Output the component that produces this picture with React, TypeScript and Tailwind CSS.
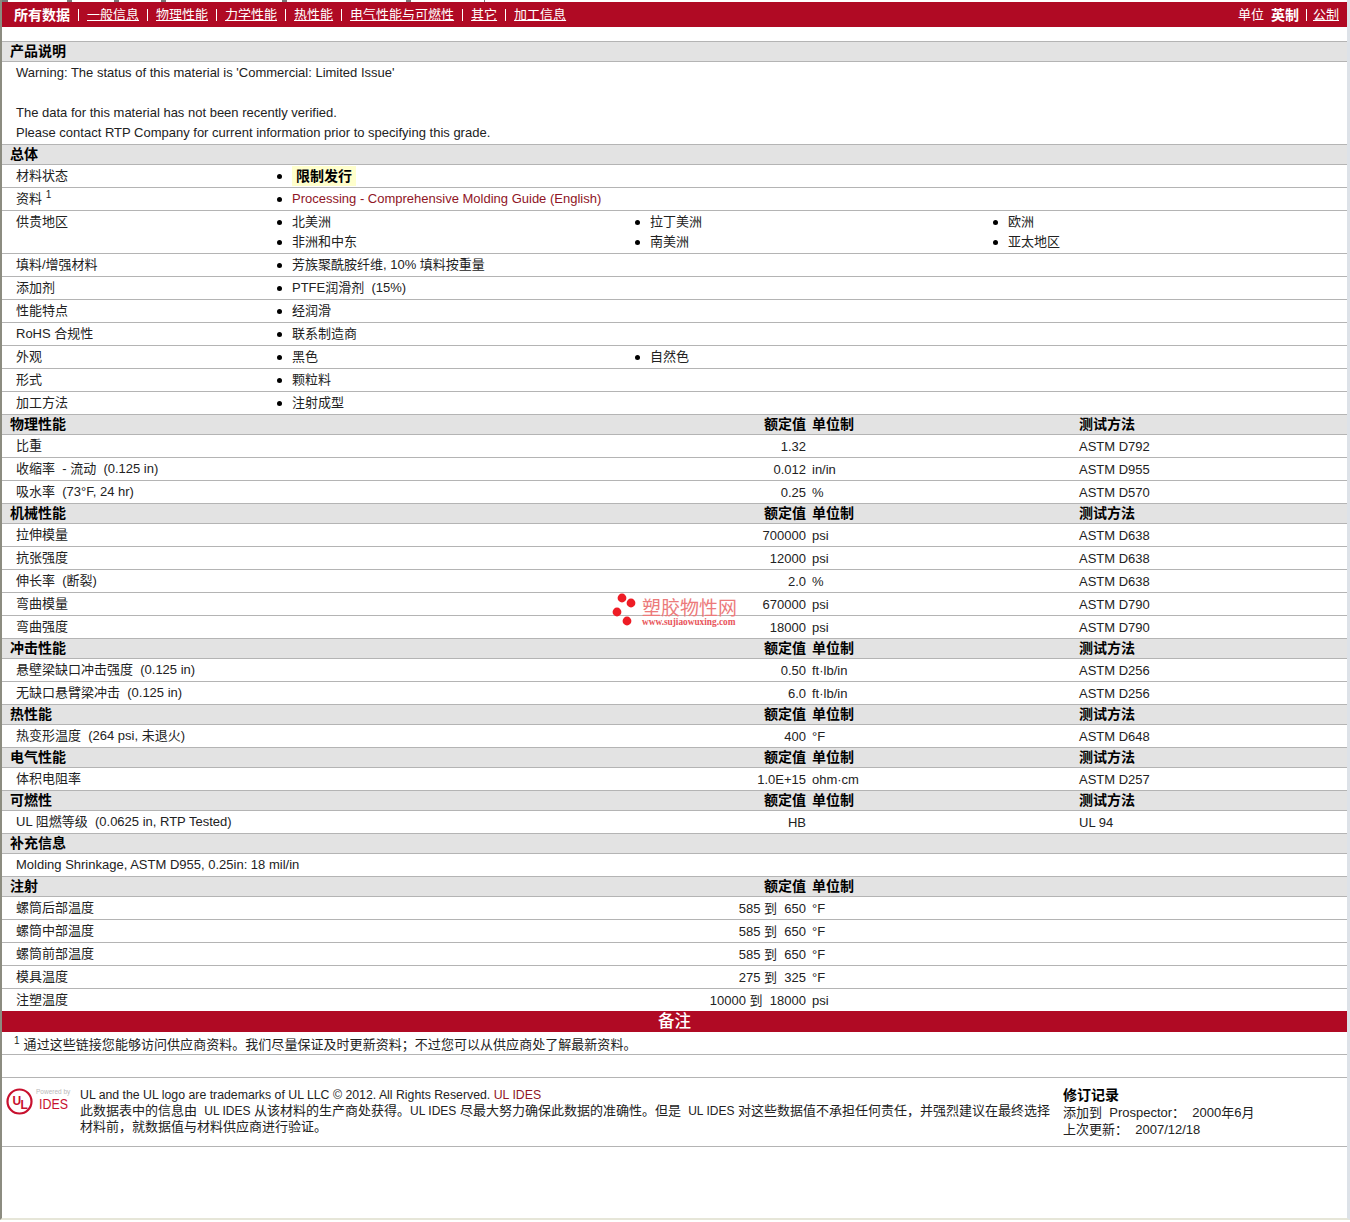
const latin = "font-['Liberation_Sans','Noto_Sans_CJK_SC',sans-serif]"

type DataRow = { label: React.ReactNode; value?: string; unit?: string; test?: string }

function SectionHeader({ title, cols }: { title: string; cols?: 'full' | 'short' }) {
  return (
    <div className="-mt-px flex h-[21px] items-center border-y border-[#b4b4b4] bg-[#e3e3e3] pb-0.5 pl-2 text-[14px] font-bold text-black">
      <span className="w-[744px] shrink-0">{title}</span>
      {cols && (
        <>
          <span className="w-[52px] shrink-0 text-right">额定值</span>
          <span className="ml-1.5 w-[267px] shrink-0">单位制</span>
          {cols === 'full' && <span>测试方法</span>}
        </>
      )}
    </div>
  )
}

function DataRows({ rows }: { rows: DataRow[] }) {
  return (
    <>
      {rows.map((row, i) => (
        <div key={i} className="flex h-[23px] items-center border-b border-[#b4b4b4] pl-3.5">
          <span className="w-[790px] shrink-0 whitespace-pre">{row.label}</span>
          <span className="flex w-0 shrink-0 justify-end pt-0.5 whitespace-pre">{row.value}</span>
          <span className="ml-1.5 w-[267px] shrink-0 pt-0.5 whitespace-pre">{row.unit}</span>
          <span className="pt-0.5">{row.test}</span>
        </div>
      ))}
    </>
  )
}

function Bullet({ children, className }: { children: React.ReactNode; className?: string }) {
  return (
    <span className={`flex items-center ${className ?? ''}`}>
      <span className="mr-2.5 size-[5px] rounded-full bg-black" />
      {children}
    </span>
  )
}

function InfoRow({ label, children }: { label: React.ReactNode; children: React.ReactNode }) {
  return (
    <div className="flex min-h-[23px] border-b border-[#b4b4b4] pt-px pl-3.5">
      <span className="w-[261px] shrink-0">{label}</span>
      <div className="grid flex-1 grid-cols-[358px_358px_1fr] pb-px">{children}</div>
    </div>
  )
}

const physical: DataRow[] = [
  { label: '比重', value: '1.32', test: 'ASTM D792' },
  { label: '收缩率  - 流动  (0.125 in)', value: '0.012', unit: 'in/in', test: 'ASTM D955' },
  { label: '吸水率  (73°F, 24 hr)', value: '0.25', unit: '%', test: 'ASTM D570' },
]
const mechanical: DataRow[] = [
  { label: '拉伸模量', value: '700000', unit: 'psi', test: 'ASTM D638' },
  { label: '抗张强度', value: '12000', unit: 'psi', test: 'ASTM D638' },
  { label: '伸长率  (断裂)', value: '2.0', unit: '%', test: 'ASTM D638' },
  { label: '弯曲模量', value: '670000', unit: 'psi', test: 'ASTM D790' },
  { label: '弯曲强度', value: '18000', unit: 'psi', test: 'ASTM D790' },
]
const impact: DataRow[] = [
  { label: '悬壁梁缺口冲击强度  (0.125 in)', value: '0.50', unit: 'ft·lb/in', test: 'ASTM D256' },
  { label: '无缺口悬臂梁冲击  (0.125 in)', value: '6.0', unit: 'ft·lb/in', test: 'ASTM D256' },
]
const injection: DataRow[] = [
  { label: '螺筒后部温度', value: '585 到  650', unit: '°F' },
  { label: '螺筒中部温度', value: '585 到  650', unit: '°F' },
  { label: '螺筒前部温度', value: '585 到  650', unit: '°F' },
  { label: '模具温度', value: '275 到  325', unit: '°F' },
  { label: '注塑温度', value: '10000 到  18000', unit: 'psi' },
]

function Watermark() {
  return (
    <div className="absolute top-[593px] left-[612px] flex h-[34px] w-[130px] items-start">
      <svg width="26" height="34" viewBox="0 0 26 34" className="shrink-0">
        <circle cx="10" cy="5" r="4.4" fill="#ee1c25" />
        <circle cx="19" cy="10" r="4.4" fill="#ee1c25" />
        <circle cx="5" cy="19" r="4.4" fill="#ee1c25" />
        <circle cx="15" cy="28" r="4.4" fill="#ee1c25" />
      </svg>
      <div className="mt-1.5 ml-1 flex flex-col">
        <span className="text-[19px] leading-[19px] text-[#ec7a7a]">塑胶物性网</span>
        <span className="font-['Liberation_Serif',serif] text-[9.3px] leading-[8px] font-bold whitespace-nowrap text-[#e8555a]">www.sujiaowuxing.com</span>
      </div>
    </div>
  )
}

function UlLogo() {
  return (
    <svg width="70" height="30" viewBox="0 0 70 30" className="shrink-0">
      <circle cx="14.5" cy="13.5" r="12" fill="none" stroke="#c8102e" strokeWidth="2.2" />
      <text x="7.5" y="16.5" fontSize="12" fontWeight="700" fill="#c8102e" fontFamily="Liberation Sans">U</text>
      <text x="15.5" y="20.5" fontSize="12" fontWeight="700" fill="#c8102e" fontFamily="Liberation Sans">L</text>
      <text x="31" y="6" fontSize="6.5" fill="#b9b9b9" fontFamily="Liberation Sans">Powered by</text>
      <text x="34" y="21" fontSize="14" textLength="29" lengthAdjust="spacingAndGlyphs" fill="#c8102e" fontFamily="Liberation Sans">IDES</text>
    </svg>
  )
}

const topTabs = ['w-[59px]', 'w-[42px]', 'w-[42px]', 'w-[116px]', 'w-[119px]', 'w-[73px]']

export default function App() {
  return (
    <div className={`relative h-[1222px] w-[1350px] bg-white text-[13px] leading-5 text-[#222] ${latin}`}>
      <div className="h-[1220px] border-r-[3px] border-b-2 border-l-2 border-r-[#dde2e8] border-b-[#e6e6d8] border-l-[#8c8c80]">
        <div className="flex h-0.5 w-[483px] gap-[5px] bg-[#777] pl-1.5">
          {topTabs.map((w, i) => (
            <span key={i} className={`h-0.5 bg-white ${w}`} />
          ))}
        </div>

        <nav className="flex h-[25px] items-center justify-between bg-[#b00a24] pr-2 pl-3 text-white">
          <div className="flex items-center">
            <span className="text-[14px] font-bold">所有数据</span>
            {['一般信息', '物理性能', '力学性能', '热性能', '电气性能与可燃性', '其它', '加工信息'].map((item) => (
              <span key={item} className="flex items-center">
                <span className="mx-2 h-3 border-l border-white" />
                <a className="underline">{item}</a>
              </span>
            ))}
          </div>
          <div className="flex items-center">
            <span>单位</span>
            <span className="ml-[7px] text-[14px] font-bold">英制</span>
            <span className="mr-1.5 ml-[7px] h-3 border-l border-white" />
            <a className="underline">公制</a>
          </div>
        </nav>

        <div className="h-[15px]" />

        <SectionHeader title="产品说明" />
        <div className="h-[83px] pt-px pl-3.5">
          <p>Warning: The status of this material is 'Commercial: Limited Issue'</p>
          <p>&nbsp;</p>
          <p>The data for this material has not been recently verified.</p>
          <p>Please contact RTP Company for current information prior to specifying this grade.</p>
        </div>

        <SectionHeader title="总体" />
        <InfoRow label="材料状态">
          <Bullet className="col-span-3">
            <span className="bg-[#ffffcc] px-1 text-[14px] font-bold text-black">限制发行</span>
          </Bullet>
        </InfoRow>
        <InfoRow label={<>资料 <sup className="text-[10px]">1</sup></>}>
          <Bullet className="col-span-3">
            <a className="text-[#8f1526]">Processing - Comprehensive Molding Guide (English)</a>
          </Bullet>
        </InfoRow>
        <InfoRow label="供贵地区">
          <Bullet>北美洲</Bullet>
          <Bullet>拉丁美洲</Bullet>
          <Bullet>欧洲</Bullet>
          <Bullet>非洲和中东</Bullet>
          <Bullet>南美洲</Bullet>
          <Bullet>亚太地区</Bullet>
        </InfoRow>
        <InfoRow label="填料/增强材料"><Bullet className="col-span-3">芳族聚酰胺纤维, 10% 填料按重量</Bullet></InfoRow>
        <InfoRow label="添加剂"><Bullet className="col-span-3 whitespace-pre">PTFE润滑剂  (15%)</Bullet></InfoRow>
        <InfoRow label="性能特点"><Bullet className="col-span-3">经润滑</Bullet></InfoRow>
        <InfoRow label="RoHS 合规性"><Bullet className="col-span-3">联系制造商</Bullet></InfoRow>
        <InfoRow label="外观">
          <Bullet>黑色</Bullet>
          <Bullet className="col-span-2">自然色</Bullet>
        </InfoRow>
        <InfoRow label="形式"><Bullet className="col-span-3">颗粒料</Bullet></InfoRow>
        <InfoRow label="加工方法"><Bullet className="col-span-3">注射成型</Bullet></InfoRow>

        <SectionHeader title="物理性能" cols="full" />
        <DataRows rows={physical} />
        <SectionHeader title="机械性能" cols="full" />
        <DataRows rows={mechanical} />
        <SectionHeader title="冲击性能" cols="full" />
        <DataRows rows={impact} />
        <SectionHeader title="热性能" cols="full" />
        <DataRows rows={[{ label: '热变形温度  (264 psi, 未退火)', value: '400', unit: '°F', test: 'ASTM D648' }]} />
        <SectionHeader title="电气性能" cols="full" />
        <DataRows rows={[{ label: '体积电阻率', value: '1.0E+15', unit: 'ohm·cm', test: 'ASTM D257' }]} />
        <SectionHeader title="可燃性" cols="full" />
        <DataRows rows={[{ label: 'UL 阻燃等级  (0.0625 in, RTP Tested)', value: 'HB', test: 'UL 94' }]} />
        <SectionHeader title="补充信息" />
        <DataRows rows={[{ label: 'Molding Shrinkage, ASTM D955, 0.25in: 18 mil/in' }]} />
        <SectionHeader title="注射" cols="short" />
        <DataRows rows={injection} />

        <div className="-mt-px flex h-[21px] items-center justify-center bg-[#b00a24] pb-0.5 text-[16.5px] font-medium text-white">备注</div>
        <div className="h-[23px] border-b border-[#b4b4b4] pt-[3px] pl-3 tracking-[0.04px]">
          <sup className="mr-1 text-[10px]">1</sup>
          通过这些链接您能够访问供应商资料。我们尽量保证及时更新资料；不过您可以从供应商处了解最新资料。
        </div>
        <div className="h-[23px] border-b border-[#b4b4b4]" />

        <footer className="flex h-[69px] border-b border-[#b4b4b4] pt-2.5 pl-[3px] leading-[15px]">
          <UlLogo />
          <div className="ml-[5px] w-[983px] shrink-0">
            <p className="text-[12.3px]">UL and the UL logo are trademarks of UL LLC © 2012. All Rights Reserved. <a className="text-[#8f1526]">UL IDES</a></p>
            <p className="whitespace-pre">
              此数据表中的信息由  <span className="text-[12px]">UL IDES</span> 从该材料的生产商处获得。<span className="text-[12px]">UL IDES</span> 尽最大努力确保此数据的准确性。但是  <span className="text-[12px]">UL IDES</span> 对这些数据值不承担任何责任，并强烈建议在最终选择
              <br />
              材料前，就数据值与材料供应商进行验证。
            </p>
          </div>
          <div className="-mt-px whitespace-pre leading-[17px]">
            <p className="text-[14px] font-bold text-black">修订记录</p>
            <p>添加到  Prospector：  2000年6月</p>
            <p>上次更新：  2007/12/18</p>
          </div>
        </footer>
      </div>

      <Watermark />
    </div>
  )
}
